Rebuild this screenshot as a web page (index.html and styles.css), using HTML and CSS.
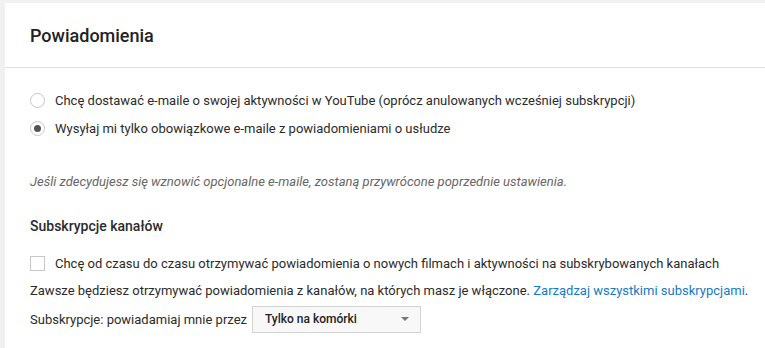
FILE: index.html
```html
<!DOCTYPE html>
<html lang="pl">
<head>
  <meta charset="UTF-8">
  <title>Powiadomienia</title>
  <link rel="stylesheet" href="styles.css">
</head>
<body>

<div class="card">
  <div class="card-header">Powiadomienia</div>

  <div class="card-body">
    <label class="option-row">
      <span class="radio"></span>
      <span>Chcę dostawać e-maile o swojej aktywności w YouTube (oprócz anulowanych wcześniej subskrypcji)</span>
    </label>
    <label class="option-row">
      <span class="radio checked"></span>
      <span>Wysyłaj mi tylko obowiązkowe e-maile z powiadomieniami o usłudze</span>
    </label>

    <div class="note">Jeśli zdecydujesz się wznowić opcjonalne e-maile, zostaną przywrócone poprzednie ustawienia.</div>

    <div class="section-title">Subskrypcje kanałów</div>

    <label class="option-row">
      <span class="checkbox"></span>
      <span>Chcę od czasu do czasu otrzymywać powiadomienia o nowych filmach i aktywności na subskrybowanych kanałach</span>
    </label>
    <div class="text-row">
      Zawsze będziesz otrzymywać powiadomienia z kanałów, na których masz je włączone. <a href="#">Zarządzaj wszystkimi subskrypcjami</a>.
    </div>
    <div class="option-row">
      <span>Subskrypcje: powiadamiaj mnie przez</span>
      <div class="select">
        <span>Tylko na komórki</span>
        <span class="arrow"></span>
      </div>
    </div>
  </div>
</div>

</body>
</html>
```

FILE: styles.css
```css
body {
    margin: 0;
    padding: 3px 0 0 5px;
    background: #f1f1f1;
    font-family: Roboto, 'Liberation Sans', sans-serif;
    color: #2b2b2b;
    font-size: 13px;
}

.card {
    background: #fff;
    height: 345px;
}

.card-header {
    height: 64px;
    line-height: 66px;
    padding-left: 25px;
    font-size: 18px;
    font-weight: 500;
    color: #222;
    border-bottom: 1px solid #e2e2e2;
}

.card-body {
    padding: 18px 25px 0;
}

.option-row {
    display: flex;
    align-items: center;
    height: 28px;
}

.text-row {
    height: 28px;
    line-height: 28px;
    white-space: nowrap;
}

.radio {
    width: 13px;
    height: 13px;
    border: 1px solid #c6c6c6;
    border-radius: 50%;
    margin-right: 10px;
    display: flex;
    align-items: center;
    justify-content: center;
}

.radio.checked::after {
    content: "";
    width: 7px;
    height: 7px;
    border-radius: 50%;
    background: #555;
}

.checkbox {
    width: 13px;
    height: 13px;
    border: 1px solid #c6c6c6;
    margin-right: 10px;
}

.note {
    margin-top: 26px;
    height: 28px;
    line-height: 28px;
    font-style: italic;
    color: #666;
}

.section-title {
    margin-top: 16px;
    margin-bottom: 9px;
    height: 28px;
    line-height: 28px;
    font-size: 14px;
    font-weight: 500;
}

a {
    color: #167ac6;
    text-decoration: none;
}

.select {
    margin-left: 5px;
    width: 155px;
    height: 25px;
    padding-left: 12px;
    background: #f8f8f8;
    border: 1px solid #d3d3d3;
    display: flex;
    align-items: center;
    justify-content: space-between;
    font-size: 12px;
    font-weight: 500;
    color: #222;
}

.arrow {
    width: 0;
    height: 0;
    border-left: 4px solid transparent;
    border-right: 4px solid transparent;
    border-top: 4px solid #777;
    margin-right: 11px;
}
```
